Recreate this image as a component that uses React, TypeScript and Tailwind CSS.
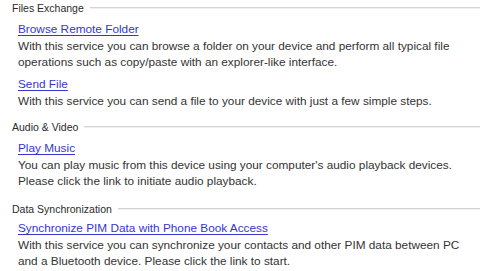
const sections = [
  {
    title: 'Files Exchange',
    mt: 'mt-0',
    items: [
      {
        link: 'Browse Remote Folder',
        lines: [
          'With this service you can browse a folder on your device and perform all typical file',
          'operations such as copy/paste with an explorer-like interface.',
        ],
      },
      {
        link: 'Send File',
        lines: ['With this service you can send a file to your device with just a few simple steps.'],
      },
    ],
  },
  {
    title: 'Audio & Video',
    mt: 'mt-[10px]',
    items: [
      {
        link: 'Play Music',
        lines: [
          "You can play music from this device using your computer's audio playback devices.",
          'Please click the link to initiate audio playback.',
        ],
      },
    ],
  },
  {
    title: 'Data Synchronization',
    mt: 'mt-[12px]',
    items: [
      {
        link: 'Synchronize PIM Data with Phone Book Access',
        lines: [
          'With this service you can synchronize your contacts and other PIM data between PC',
          'and a Bluetooth device. Please click the link to start.',
        ],
      },
    ],
  },
]

export default function App() {
  return (
    <div className="w-[480px] h-[271px] overflow-hidden bg-white font-['Liberation_Sans',Arial,sans-serif] text-[11.8px] leading-4 text-[#333333]">
      {sections.map((s, si) => (
        <div key={s.title} className={s.mt}>
          <div className="flex items-center h-4 pl-3">
            <span className="text-[10.5px] text-[#2a2a2a] whitespace-nowrap">{s.title}</span>
            <div className="flex-1 ml-[6px] h-[2px] border-t border-[#d4d4d4] bg-[#f0f0f0]" />
          </div>
          {s.items.map((it, ii) => (
            <div key={it.link} className={ii === 0 ? (si === 2 ? 'mt-[3px]' : 'mt-[5px]') : 'mt-[6px]'}>
              <a href="#" className="block pl-[18px] text-[#3535d0] underline underline-offset-2">
                {it.link}
              </a>
              <div className="pl-[18px] mt-px">
                {it.lines.map((l) => (
                  <div key={l} className="whitespace-nowrap">{l}</div>
                ))}
              </div>
            </div>
          ))}
        </div>
      ))}
    </div>
  )
}
